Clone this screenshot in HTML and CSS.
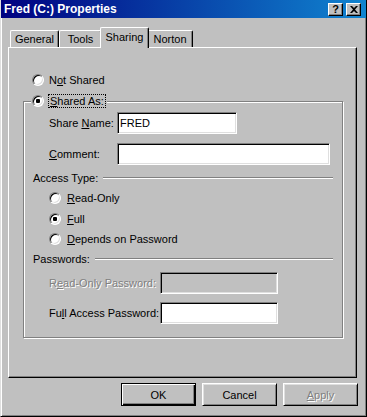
FILE: index.html
```html
<!doctype html>
<html>

<head>
  <meta charset="UTF-8" />
  <meta name="viewport" content="width=device-width, initial-scale=1.0" />
  <title>Fred (C:) Properties</title>
  <link rel="stylesheet" href="styles.css">
</head>

<body>
  <div class="window">
    <div class="titlebar">
      <span class="title">Fred (C:) Properties</span>
      <div class="caption-buttons">
        <span class="caption-btn">?</span>
        <span class="caption-btn">
          <svg width="8" height="7" viewBox="0 0 8 7">
            <path d="M0 0h2l2 2 2-2h2L5 3.5 8 7H6L4 5 2 7H0l3-3.5z" fill="#000" />
          </svg>
        </span>
      </div>
    </div>

    <div class="tabs">
      <div class="tab tab-general">General</div>
      <div class="tab tab-tools">Tools</div>
      <div class="tab active">Sharing</div>
      <div class="tab tab-norton">Norton</div>
    </div>

    <div class="panel">
      <div class="option top-option">
        <span class="radio"></span>
        <span>N<u>o</u>t Shared</span>
      </div>

      <div class="group">
        <div class="option group-head">
          <span class="radio checked"></span>
          <span class="focus"><u>S</u>hared As:</span>
        </div>

        <div class="field share-name">
          <label class="field-label">Share <u>N</u>ame:</label>
          <input class="input name-input" value="FRED" />
        </div>

        <div class="field comment">
          <label class="field-label"><u>C</u>omment:</label>
          <input class="input comment-input" value="" />
        </div>

        <div class="heading">Access Type:</div>

        <div class="choices">
          <div class="option"><span class="radio"></span><span><u>R</u>ead-Only</span></div>
          <div class="option"><span class="radio checked"></span><span><u>F</u>ull</span></div>
          <div class="option"><span class="radio"></span><span><u>D</u>epends on Password</span></div>
        </div>

        <div class="heading">Passwords:</div>

        <div class="field pw-readonly">
          <label class="field-label wide disabled">R<u>e</u>ad-Only Password:</label>
          <input class="input pw-input" type="password" disabled />
        </div>

        <div class="field pw-full">
          <label class="field-label wide">Fu<u>l</u>l Access Password:</label>
          <input class="input pw-input" type="password" />
        </div>
      </div>
    </div>

    <div class="actions">
      <button class="btn default">OK</button>
      <button class="btn">Cancel</button>
      <button class="btn" disabled><u>A</u>pply</button>
    </div>
  </div>
</body>

</html>
```

FILE: styles.css
```css
body {
  margin: 0;
  font-family: "Liberation Sans", Arial, sans-serif;
  font-size: 11px;
  color: #000;
}

.window {
  width: 367px;
  height: 417px;
  box-sizing: border-box;
  background: #c0c0c0;
  border-left: 1px solid #dfdfdf;
  border-right: 1px solid #000;
  border-bottom: 1px solid #000;
  box-shadow: inset 1px 0 #fff, inset -1px -1px #808080;
  display: flex;
  flex-direction: column;
}

/* title bar */

.titlebar {
  height: 18px;
  flex: none;
  display: flex;
  align-items: center;
  justify-content: space-between;
  padding: 0 5px 0 3px;
  background: linear-gradient(to right, #000080, #1084d0);
  color: #fff;
}

.title {
  font-weight: bold;
  font-size: 12px;
}

.caption-buttons {
  display: flex;
  gap: 3px;
}

.caption-btn {
  width: 15px;
  height: 13px;
  box-sizing: border-box;
  display: flex;
  align-items: center;
  justify-content: center;
  background: #c0c0c0;
  border: 1px solid;
  border-color: #fff #000 #000 #fff;
  box-shadow: inset -1px -1px #808080;
  color: #000;
  font-weight: bold;
  font-size: 11px;
  line-height: 1;
}

/* tabs */

.tabs {
  display: flex;
  align-items: flex-end;
  margin-top: 9px;
  padding-left: 9px;
}

.tab {
  height: 17px;
  box-sizing: border-box;
  display: flex;
  align-items: center;
  justify-content: center;
  background: #c0c0c0;
  border: 1px solid;
  border-color: #fff #000 transparent #fff;
  border-bottom: none;
  border-radius: 2px 2px 0 0;
  box-shadow: inset -1px 0 #808080;
}

.tab-general {
  width: 49px;
}

.tab-tools {
  width: 43px;
}

.tab-norton {
  width: 46px;
}

.tab.active {
  width: 49px;
  height: 21px;
  margin: 0 -2px -1px;
  position: relative;
  z-index: 1;
  padding-bottom: 2px;
}

/* page */

.panel {
  margin-left: 7px;
  width: 349px;
  height: 331px;
  box-sizing: border-box;
  border: 1px solid;
  border-color: #fff #000 #000 #fff;
  box-shadow: inset -1px -1px #808080;
  padding: 25px 13px 0 14px;
}

.option {
  display: flex;
  align-items: center;
  gap: 5px;
  height: 14px;
}

.top-option {
  padding-left: 9px;
}

.radio {
  width: 12px;
  height: 12px;
  flex: none;
  box-sizing: border-box;
  display: flex;
  align-items: center;
  justify-content: center;
  border-radius: 50%;
  border: 1px solid;
  border-color: #808080 #fff #fff #808080;
  box-shadow: inset 1px 1px #000, inset -1px -1px #dfdfdf;
  background: #fff;
}

.radio.checked::after {
  content: "";
  width: 4px;
  height: 4px;
  border-radius: 1px;
  background: #000;
}

.group {
  margin-top: 14px;
  height: 237px;
  box-sizing: border-box;
  display: flex;
  flex-direction: column;
  border: 1px solid #808080;
  box-shadow: 1px 1px #fff, inset 1px 1px #fff;
}

.group-head {
  align-self: flex-start;
  gap: 4px;
  margin: -8px 0 0 7px;
  padding: 0 1px;
  background: #c0c0c0;
}

.focus {
  border: 1px dotted #000;
  padding: 0 1px;
  line-height: 12px;
}

.field {
  display: flex;
  align-items: center;
  padding-left: 25px;
}

.field-label {
  width: 68px;
  flex: none;
}

.field-label.wide {
  width: 111px;
}

.disabled {
  color: #808080;
  text-shadow: 1px 1px #fff;
}

.input {
  height: 22px;
  box-sizing: border-box;
  margin: 0;
  padding: 0 2px;
  font: inherit;
  color: #000;
  background: #fff;
  border: 1px solid;
  border-color: #808080 #fff #fff #808080;
  box-shadow: inset 1px 1px #000, inset -1px -1px #dfdfdf;
  outline: none;
}

.input:disabled {
  background: #c0c0c0;
}

.share-name {
  margin-top: 4px;
}

.name-input {
  width: 120px;
}

.comment {
  margin-top: 9px;
}

.comment-input {
  width: 213px;
}

.heading {
  display: flex;
  align-items: center;
  height: 13px;
  margin-top: 6px;
  padding: 0 9px;
}

.heading::after {
  content: "";
  flex: 1;
  margin-left: 5px;
  border-top: 1px solid #808080;
  border-bottom: 1px solid #fff;
}

.choices {
  display: flex;
  flex-direction: column;
  gap: 6.5px;
  margin: 7px 0 0;
  padding-left: 25px;
}

.choices .option {
  gap: 6px;
}

.pw-readonly {
  margin-top: 7px;
}

.pw-full {
  margin-top: 8px;
}

.pw-input {
  width: 118px;
}

/* buttons */

.actions {
  display: flex;
  justify-content: flex-end;
  gap: 6px;
  margin-top: 5px;
  padding-right: 8px;
}

.btn {
  width: 75px;
  height: 23px;
  box-sizing: border-box;
  padding: 0;
  font: inherit;
  color: #000;
  background: #c0c0c0;
  border: 1px solid;
  border-color: #fff #000 #000 #fff;
  box-shadow: inset 1px 1px #dfdfdf, inset -1px -1px #808080;
}

.btn.default {
  border-color: #000;
  box-shadow: inset 1px 1px #fff, inset -1px -1px #000, inset -2px -2px #808080;
}

.btn:disabled {
  color: #808080;
  text-shadow: 1px 1px #fff;
}
```
